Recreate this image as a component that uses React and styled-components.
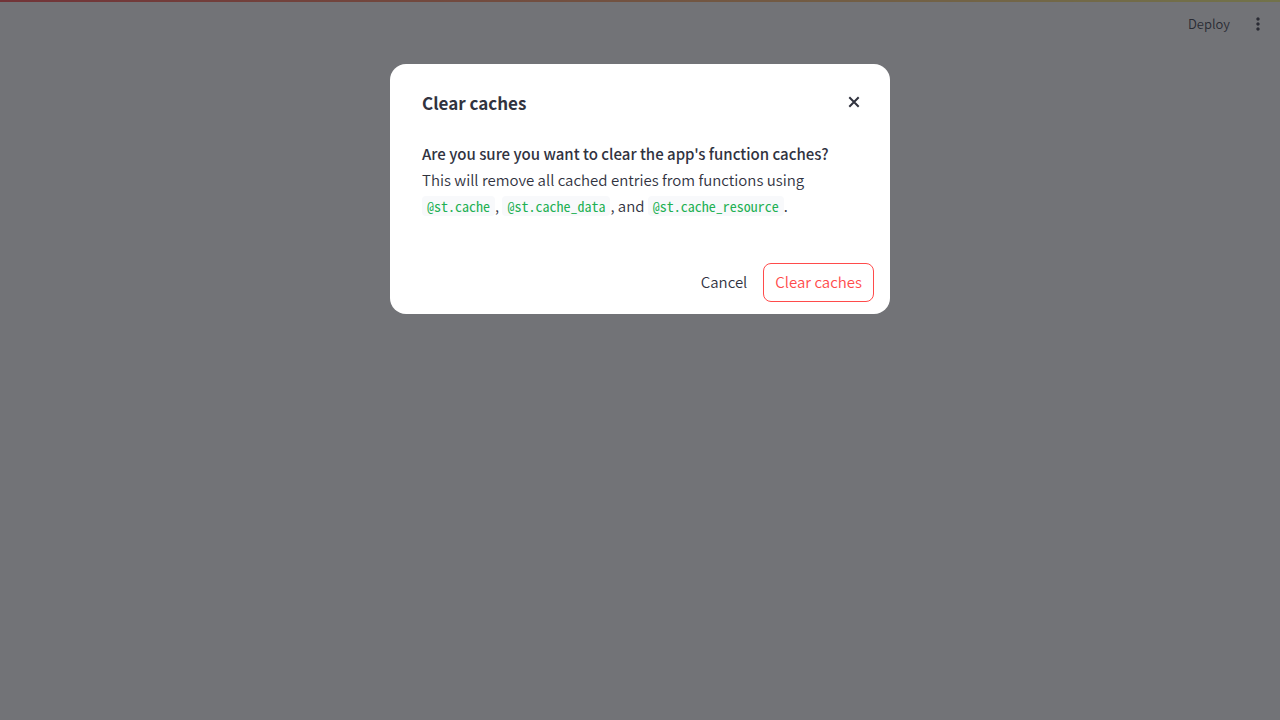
import React from "react";
import styled, { createGlobalStyle } from "styled-components";

const GlobalStyle = createGlobalStyle`
  *, *::before, *::after { box-sizing: border-box; }
  body {
    margin: 0;
    background: #ffffff;
    color: #31333f;
    font-family: "Source Sans Pro", "Noto Sans CJK SC", "Open Sans", sans-serif;
    font-size: 15px;
    font-weight: 350;
    line-height: 26px;
  }
  button { font: inherit; color: inherit; cursor: pointer; }
`;

const Page = styled.div`
  min-height: 100vh;
`;

const Decoration = styled.div`
  height: 2px;
  background: linear-gradient(90deg, #ff4b4b, #fffd80);
`;

const Toolbar = styled.header`
  display: flex;
  justify-content: flex-end;
  align-items: center;
  gap: 8px;
  height: 44px;
  padding: 0 12px;
`;

const ToolbarButton = styled.button`
  display: flex;
  align-items: center;
  justify-content: center;
  height: 28px;
  padding: 0 ${(p) => (p.$icon ? "0" : "10px")};
  min-width: 20px;
  border: 0;
  background: transparent;
  font-size: 13px;
  line-height: 20px;
`;

const Backdrop = styled.div`
  position: fixed;
  inset: 0;
  display: flex;
  justify-content: center;
  align-items: flex-start;
  padding: 64px 16px;
  overflow: auto;
  background: rgba(38, 40, 46, 0.65);
`;

const Dialog = styled.section`
  width: 100%;
  max-width: 500px;
  border-radius: 16px;
  background: #ffffff;
`;

const DialogHeader = styled.div`
  display: flex;
  justify-content: space-between;
  align-items: flex-start;
  padding: 24px 28px 12px 32px;
`;

const Title = styled.h2`
  margin: 0;
  font-size: 17px;
  font-weight: 600;
  line-height: 30px;
`;

const CloseButton = styled.button`
  display: flex;
  padding: 6px 0;
  border: 0;
  background: transparent;
`;

const DialogBody = styled.div`
  padding: 11px 32px 32px;
`;

const Paragraph = styled.p`
  margin: 0;
`;

const Strong = styled.strong`
  font-weight: 500;
`;

const Code = styled.code`
  padding: 0 5px;
  border-radius: 4px;
  background: #f8f9fb;
  color: #21b052;
  font-family: "Noto Sans Mono CJK SC", "Liberation Mono", monospace;
  font-size: 14px;
  font-weight: 400;
  line-height: 14px;
`;

const DialogFooter = styled.div`
  display: flex;
  justify-content: flex-end;
  gap: 4px;
  padding: 12px 16px;
`;

const Button = styled.button`
  height: 39px;
  padding: 0 11px 2px;
  border: 1px solid ${(p) => (p.$primary ? "#ff4b4b" : "transparent")};
  border-radius: 8px;
  background: transparent;
  color: ${(p) => (p.$primary ? "#ff4b4b" : "#31333f")};
`;

function MoreIcon() {
  return (
    <svg width="20" height="20" viewBox="0 0 24 24" fill="currentColor" aria-hidden="true">
      <path d="M12 8c1.100 0 2-.9 2-2s-.9-2-2-2-2 .9-2 2 .9 2 2 2zm0 2c-1.100 0-2 .9-2 2s.9 2 2 2 2-.9 2-2-.9-2-2-2zm0 6c-1.100 0-2 .9-2 2s.9 2 2 2 2-.9 2-2-.9-2-2-2z" />
    </svg>
  );
}

function CloseIcon() {
  return (
    <svg width="16" height="16" viewBox="0 0 16 16" fill="none" stroke="#31333f" strokeWidth="2" aria-hidden="true">
      <path d="M3.300 3.300l9.400 9.400M12.700 3.300l-9.400 9.400" />
    </svg>
  );
}

export default function App() {
  return (
    <Page>
      <GlobalStyle />
      <Decoration />
      <Toolbar>
        <ToolbarButton type="button">Deploy</ToolbarButton>
        <ToolbarButton type="button" $icon aria-label="Main menu">
          <MoreIcon />
        </ToolbarButton>
      </Toolbar>
      <Backdrop>
        <Dialog role="dialog" aria-modal="true" aria-labelledby="dialog-title">
          <DialogHeader>
            <Title id="dialog-title">Clear caches</Title>
            <CloseButton type="button" aria-label="Close">
              <CloseIcon />
            </CloseButton>
          </DialogHeader>
          <DialogBody>
            <Paragraph>
              <Strong>Are you sure you want to clear the app's function caches?</Strong>
            </Paragraph>
            <Paragraph>
              This will remove all cached entries from functions using{" "}
              <Code>@st.cache</Code>, <Code>@st.cache_data</Code>, and{" "}
              <Code>@st.cache_resource</Code>.
            </Paragraph>
          </DialogBody>
          <DialogFooter>
            <Button type="button">Cancel</Button>
            <Button type="button" $primary>Clear caches</Button>
          </DialogFooter>
        </Dialog>
      </Backdrop>
    </Page>
  );
}
